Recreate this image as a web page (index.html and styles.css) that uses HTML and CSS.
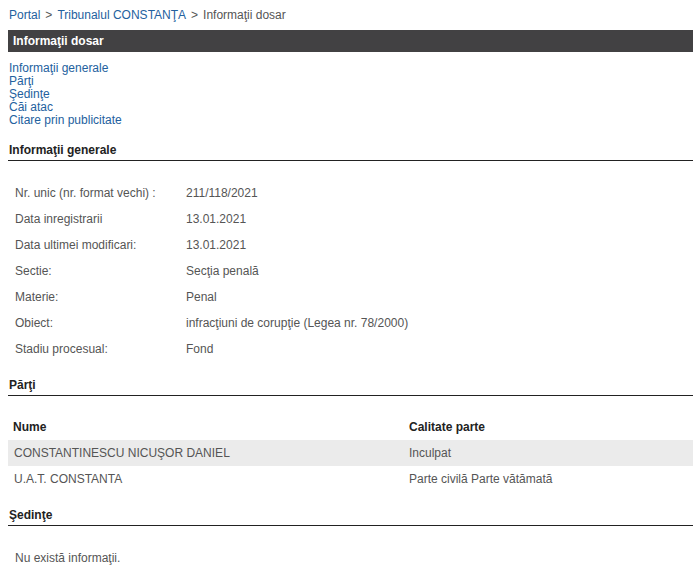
FILE: index.html
```html
<!DOCTYPE html>
<html lang="ro">
<head>
  <meta charset="UTF-8" />
  <title>Informaţii dosar</title>
  <link rel="stylesheet" href="styles.css">
</head>
<body>
  <div class="page">
    <div class="breadcrumb">
      <a href="#">Portal</a><span class="sep">&gt;</span><a href="#">Tribunalul CONSTANŢA</a><span class="sep">&gt;</span><span class="current">Informaţii dosar</span>
    </div>

    <div class="title-bar">Informaţii dosar</div>

    <div class="toc">
      <a href="#generale">Informaţii generale</a>
      <a href="#parti">Părţi</a>
      <a href="#sedinte">Şedinţe</a>
      <a href="#cai">Căi atac</a>
      <a href="#citare">Citare prin publicitate</a>
    </div>

    <h2 id="generale" class="section-title">Informaţii generale</h2>
    <table class="info-table">
      <tr><td class="label">Nr. unic (nr. format vechi) :</td><td>211/118/2021</td></tr>
      <tr><td class="label">Data inregistrarii</td><td>13.01.2021</td></tr>
      <tr><td class="label">Data ultimei modificari:</td><td>13.01.2021</td></tr>
      <tr><td class="label">Sectie:</td><td>Secţia penală</td></tr>
      <tr><td class="label">Materie:</td><td>Penal</td></tr>
      <tr><td class="label">Obiect:</td><td>infracţiuni de corupţie (Legea nr. 78/2000)</td></tr>
      <tr><td class="label">Stadiu procesual:</td><td>Fond</td></tr>
    </table>

    <h2 id="parti" class="section-title">Părţi</h2>
    <table class="list-table">
      <thead>
        <tr><th class="col-name">Nume</th><th>Calitate parte</th></tr>
      </thead>
      <tbody>
        <tr class="alt"><td>CONSTANTINESCU NICUŞOR DANIEL</td><td>Inculpat</td></tr>
        <tr><td>U.A.T. CONSTANTA</td><td>Parte civilă Parte vătămată</td></tr>
      </tbody>
    </table>

    <h2 id="sedinte" class="section-title">Şedinţe</h2>
    <p class="empty">Nu există informaţii.</p>
  </div>
</body>
</html>
```

FILE: styles.css
```css
html, body {
  margin: 0;
  padding: 0;
  background: #fff;
  font-family: "Liberation Sans", Arial, sans-serif;
  font-size: 12px;
}
.page {
  width: 685px;
  margin: 8px 0 0 8px;
}
a {
  color: #23619e;
  text-decoration: none;
}

.breadcrumb {
  line-height: 14px;
  padding-left: 1px;
}
.breadcrumb .sep {
  color: #555;
  margin: 0 5px;
}
.breadcrumb .current { color: #555; }

.title-bar {
  margin-top: 8px;
  height: 22px;
  line-height: 22px;
  background: #424143;
  color: #fff;
  font-weight: bold;
  padding-left: 5px;
}

.toc {
  margin-top: 10px;
  padding-left: 1px;
}
.toc a {
  display: block;
  line-height: 13px;
}

.section-title {
  margin: 16px 0 0 0;
  padding: 0 0 3px 1px;
  font-size: 12px;
  line-height: 14px;
  font-weight: bold;
  color: #222;
  border-bottom: 1px solid #222;
}

.info-table, .list-table {
  border-collapse: collapse;
  color: #555;
}
.info-table { margin-top: 19px; }
.list-table { margin-top: 18px; }
.info-table td {
  height: 26px;
  padding: 0 7px;
  vertical-align: middle;
}
.info-table td.label { width: 157px; }

.list-table { width: 685px; }
.list-table th, .list-table td {
  height: 26px;
  padding: 0 6px;
  text-align: left;
  vertical-align: middle;
}
.list-table th {
  color: #222;
  font-weight: bold;
}
.list-table th.col-name { width: 384px; padding-left: 5px; }
.list-table tr.alt td { background: #ebebeb; }

.empty {
  margin: 19px 0 0 0;
  padding-left: 7px;
  line-height: 26px;
  color: #555;
}
```
